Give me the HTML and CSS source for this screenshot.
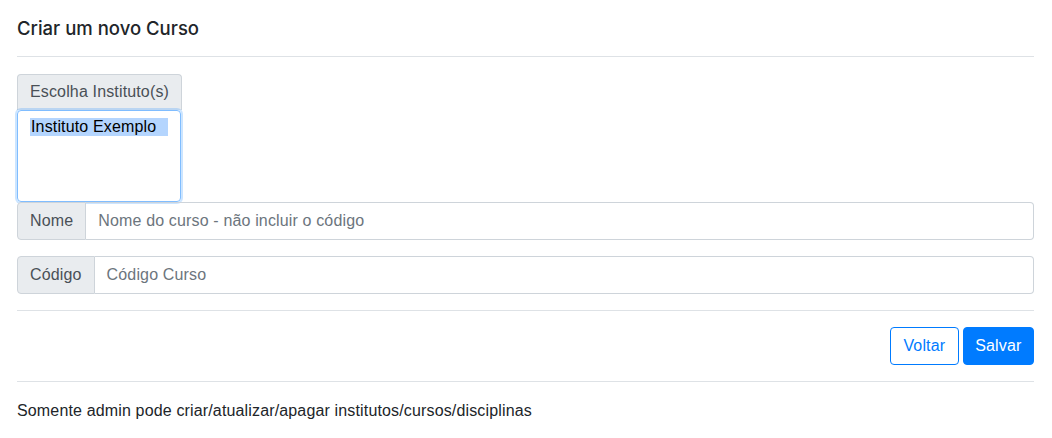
FILE: index.html
```html
<!DOCTYPE html>
<html lang="pt">
<head>
<meta charset="utf-8">
<title>Criar um novo Curso</title>
<link rel="stylesheet" href="styles.css">
</head>
<body>
<div class="page">
  <div class="header">
    <h5 class="title">Criar um novo Curso</h5>
  </div>
  <div class="body">
    <div class="select-group">
      <label class="select-label">Escolha Instituto(s)</label>
      <div class="select-box">
        <div class="option selected">Instituto Exemplo</div>
      </div>
    </div>
    <div class="input-group">
      <span class="addon">Nome</span>
      <span class="field">Nome do curso - não incluir o código</span>
    </div>
    <div class="input-group">
      <span class="addon">Código</span>
      <span class="field">Código Curso</span>
    </div>
  </div>
  <div class="actions">
    <button class="btn btn-outline">Voltar</button>
    <button class="btn btn-primary">Salvar</button>
  </div>
  <div class="note">Somente admin pode criar/atualizar/apagar institutos/cursos/disciplinas</div>
</div>
</body>
</html>
```

FILE: styles.css
```css
* { box-sizing: border-box; }
html, body { margin: 0; padding: 0; background: #fff; }
body {
  font-family: "Liberation Sans", Arial, sans-serif;
  font-size: 16px;
  line-height: 1.5;
  letter-spacing: 0.15px;
  color: #212529;
}
.page { padding: 0 18px 0 17px; }
.header {
  padding: 17px 0 16px;
  border-bottom: 1px solid #dee2e6;
}
.title {
  margin: 0;
  font-family: "Inter", "Liberation Sans", sans-serif;
  font-size: 18.5px;
  font-weight: 500;
  letter-spacing: 0;
  line-height: 23px;
}
.body { padding: 17px 0 16px; border-bottom: 1px solid #dee2e6; }
.select-group { display: flex; flex-direction: column; align-items: flex-start; }
.select-label {
  display: block;
  width: 165px;
  height: 36px;
  padding: 5px 0;
  background: #e9ecef;
  border: 1px solid #ced4da;
  border-bottom: 0;
  border-radius: 4px 4px 0 0;
  color: #495057;
  text-align: center;
  white-space: nowrap;
}
.select-box {
  width: 164px;
  height: 92px;
  border: 1px solid #80bdff;
  border-radius: 4px;
  box-shadow: 0 0 0 2px rgba(0,123,255,.2);
  padding: 7px 12px;
  color: #000;
}
.option {
  width: max-content;
  padding: 0 12px 0 1px;
  line-height: 18px;
  white-space: nowrap;
}
.option.selected { background: #b4d5fe; }
.input-group {
  display: flex;
  height: 38px;
  margin-bottom: 16px;
}
.input-group:last-child { margin-bottom: 0; }
.addon {
  display: flex;
  align-items: center;
  padding: 0 12px;
  background: #e9ecef;
  border: 1px solid #ced4da;
  border-radius: 4px 0 0 4px;
  color: #495057;
}
.field {
  flex: 1;
  display: flex;
  align-items: center;
  padding: 0 12px;
  border: 1px solid #ced4da;
  border-left: 0;
  border-radius: 0 4px 4px 0;
  color: #6c757d;
}
.actions {
  display: flex;
  justify-content: flex-end;
  gap: 4px;
  padding: 16px 0;
  border-bottom: 1px solid #dee2e6;
}
.btn {
  font: inherit;
  letter-spacing: inherit;
  height: 38px;
  border-radius: 4px;
  border: 1px solid #007bff;
  cursor: pointer;
}
.btn-outline { background: #fff; color: #007bff; padding: 0 12.5px; }
.btn-primary { background: #007bff; color: #fff; padding: 0 11.5px; }
.note { padding: 17px 0 15px; }
```
